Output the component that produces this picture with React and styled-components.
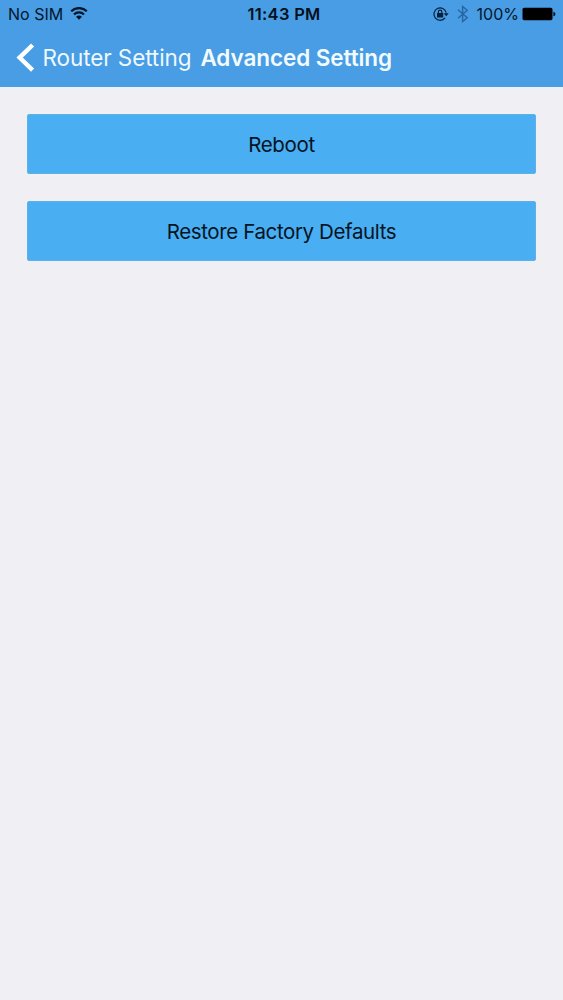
import React from "react";
import styled, { createGlobalStyle } from "styled-components";

const GlobalStyle = createGlobalStyle`
  * {
    box-sizing: border-box;
  }

  body {
    margin: 0;
    background: #efeff4;
    font-family: Inter, "Liberation Sans", sans-serif;
  }
`;

const actions = [
  { label: "Reboot", spacing: "-0.35px" },
  { label: "Restore Factory Defaults", spacing: "-0.38px" },
];

const App = () => {
  return (
    <Screen>
      <GlobalStyle />
      <Header>
        <StatusBar>
          <StatusGroup>
            <StatusText>No SIM</StatusText>
            <WifiIcon />
          </StatusGroup>
          <Clock>11:43 PM</Clock>
          <StatusGroup $end>
            <LockIcon />
            <BluetoothIcon />
            <StatusText>100%</StatusText>
            <BatteryIcon />
          </StatusGroup>
        </StatusBar>
        <NavBar>
          <BackButton>
            <BackIcon />
            Router Setting
          </BackButton>
          <Title>Advanced Setting</Title>
        </NavBar>
      </Header>
      <Content>
        {actions.map((action) => (
          <ActionButton key={action.label} $spacing={action.spacing}>
            {action.label}
          </ActionButton>
        ))}
      </Content>
    </Screen>
  );
};

const WifiIcon = () => (
  <svg width="18" height="14" viewBox="0 0 18 14" fill="none" stroke="#04162b">
    <path d="M1.2 4.3a11 11 0 0 1 15.6 0" strokeWidth="2.2" />
    <path d="M4 7.4a7.1 7.1 0 0 1 10 0" strokeWidth="2.1" />
    <path d="M9 12.8 6.1 9.8a4 4 0 0 1 5.8 0z" fill="#04162b" stroke="none" />
  </svg>
);

const LockIcon = () => (
  <svg width="16" height="14" viewBox="0 0 16 14" fill="none" stroke="#06213c">
    <path d="M13.2 5.6A6.2 6.2 0 1 0 12.1 10.9" strokeWidth="1.2" />
    <path d="M10.7 6.3h5l-2.5 3z" fill="#06213c" stroke="none" />
    <rect x="4" y="5.9" width="6.2" height="4.7" rx="0.5" fill="#06213c" stroke="none" />
    <path d="M5.4 6.4V4.9a1.7 1.7 0 0 1 3.4 0v1.5" strokeWidth="1.2" />
  </svg>
);

const BluetoothIcon = () => (
  <svg width="12" height="18" viewBox="0 0 12 18" fill="none" stroke="#27659f" strokeWidth="1.4">
    <path d="M1 4.8 10.2 12.8 5.6 16.5V1.5l4.6 3.7-9.2 8" />
  </svg>
);

const BatteryIcon = () => (
  <svg width="34" height="14" viewBox="0 0 34 14">
    <rect x="0.5" y="0.8" width="30" height="12.4" rx="1.6" fill="#000" />
    <path d="M31.4 4.7c1.4.4 2 1.2 2 2.3s-.6 1.9-2 2.3z" fill="#04162b" />
  </svg>
);

const BackIcon = () => (
  <svg width="19" height="30" viewBox="0 0 19 30" fill="none" stroke="#fff" strokeWidth="4.4">
    <path d="M16.6 2 3.6 14.6l13 12.6" />
  </svg>
);

const Screen = styled.div`
  width: 563px;
  height: 1000px;
  overflow: hidden;
  background: #efeff4;
`;

const Header = styled.header`
  height: 87px;
  background: #489de4;
`;

const StatusBar = styled.div`
  display: grid;
  grid-template-columns: 239.5px auto 1fr;
  align-items: center;
  height: 28px;
  padding: 0 7px 0 8px;
  color: #04162b;
`;

const StatusGroup = styled.div`
  display: flex;
  align-items: center;
  justify-content: ${(props) => (props.$end ? "flex-end" : "flex-start")};
  gap: ${(props) => (props.$end ? "8px" : "7px")};

  svg:last-child {
    margin-left: ${(props) => (props.$end ? "-5px" : "0")};
  }
`;

const StatusText = styled.span`
  font-size: 16px;
  line-height: 28px;
`;

const Clock = styled.span`
  font-size: 16.5px;
  font-weight: 600;
  line-height: 28px;
  letter-spacing: 0.3px;
  color: #021020;
`;

const NavBar = styled.nav`
  display: flex;
  align-items: center;
  height: 59px;
  padding-left: 16px;
  color: #fff;
`;

const BackButton = styled.button`
  display: flex;
  align-items: center;
  gap: 7.5px;
  padding: 0;
  border: 0;
  background: none;
  color: #eef9ff;
  font-family: inherit;
  font-size: 22.5px;
  letter-spacing: -0.1px;
  white-space: nowrap;
`;

const Title = styled.h1`
  margin: 0 0 0 9px;
  color: #f2fbff;
  font-size: 22.5px;
  font-weight: 600;
  letter-spacing: -0.08px;
  white-space: nowrap;
`;

const Content = styled.main`
  display: flex;
  flex-direction: column;
  gap: 27px;
  padding: 27px;
`;

const ActionButton = styled.button`
  height: 60px;
  padding: 0;
  border: 1px solid #5fb0e6;
  border-radius: 2px;
  background: #49aef2;
  color: #04141f;
  font-family: inherit;
  font-size: 20.5px;
  letter-spacing: ${(props) => props.$spacing};
`;

export default App;
